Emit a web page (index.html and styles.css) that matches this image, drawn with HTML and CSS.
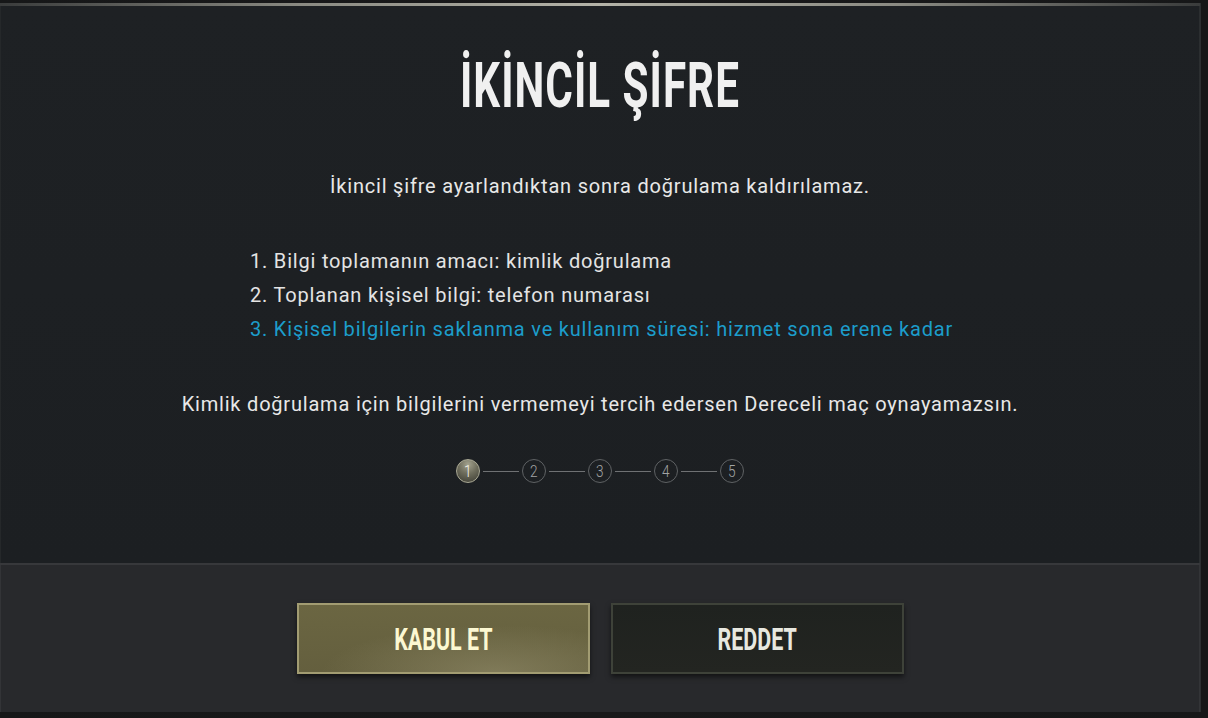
FILE: index.html
```html
<!DOCTYPE html>
<html lang="tr">
<head>
<meta charset="utf-8">
<title>İkincil Şifre</title>
<link rel="stylesheet" href="styles.css">
</head>
<body>
<div class="backdrop">
  <div class="dialog">
    <div class="topline"></div>
    <div class="content">
      <h1 class="title"><span class="squeeze">İKİNCİL ŞİFRE</span></h1>
      <p class="lead">İkincil şifre ayarlandıktan sonra doğrulama kaldırılamaz.</p>
      <ol class="info">
        <li>1. Bilgi toplamanın amacı: kimlik doğrulama</li>
        <li>2. Toplanan kişisel bilgi: telefon numarası</li>
        <li class="accent">3. Kişisel bilgilerin saklanma ve kullanım süresi: hizmet sona erene kadar</li>
      </ol>
      <p class="warn">Kimlik doğrulama için bilgilerini vermemeyi tercih edersen Dereceli maç oynayamazsın.</p>
      <div class="steps">
        <span class="step active"><span class="digit">1</span></span>
        <span class="link"></span>
        <span class="step"><span class="digit">2</span></span>
        <span class="link"></span>
        <span class="step"><span class="digit">3</span></span>
        <span class="link"></span>
        <span class="step"><span class="digit">4</span></span>
        <span class="link"></span>
        <span class="step"><span class="digit">5</span></span>
      </div>
    </div>
    <div class="footer">
      <button class="btn btn-accept"><span class="squeeze">KABUL ET</span></button>
      <button class="btn btn-reject"><span class="squeeze">REDDET</span></button>
    </div>
  </div>
</div>
</body>
</html>
```

FILE: styles.css
```css
html, body {
  margin: 0;
  padding: 0;
}

body {
  background: #121314;
  width: 1208px;
  height: 718px;
  overflow: hidden;
  font-family: Roboto, "Liberation Sans", sans-serif;
}

.backdrop {
  height: 718px;
  padding-top: 3px;
  box-sizing: border-box;
  background: linear-gradient(90deg, #161718 0%, #19191a 50%, #161718 100%);
}

.dialog {
  width: 1200px;
  height: 709px;
  display: flex;
  flex-direction: column;
  background: #1d2023;
  box-shadow: 1px 0 0 #2c2f31;
}

.topline {
  height: 3px;
  background: linear-gradient(90deg, #3a3c3c 0%, #8a8a82 25%, #b4b3a8 50%, #8a8a82 75%, #3a3c3c 100%);
}

.content {
  flex: 1;
  display: flex;
  flex-direction: column;
  align-items: center;
  padding-top: 50px;
  background: linear-gradient(180deg, #1e2124 0%, #1c1f22 100%);
  border-left: 1px solid #25282a;
  border-right: 1px solid #2b2e30;
}

.title {
  margin: 0;
  height: 60px;
  font-size: 63px;
  line-height: 60px;
  font-weight: 700;
  color: #f0f0f0;
  letter-spacing: 1.5px;
}

.squeeze {
  display: inline-block;
  transform: scaleX(0.67);
}

.lead,
.info,
.warn {
  font-size: 20px;
  letter-spacing: 0.8px;
}

.lead {
  margin: 56px 0 0;
  line-height: 28px;
  color: #e8e8e8;
}

.info {
  list-style: none;
  margin: 44px 0 0;
  padding: 0;
  align-self: flex-start;
  margin-left: 249px;
  line-height: 34px;
  color: #e4e4e4;
}

.info .accent {
  color: #1c9dcb;
}

.warn {
  margin: 44px 0 0;
  line-height: 28px;
  color: #e8e8e8;
}

.steps {
  margin-top: 41px;
  display: flex;
  align-items: center;
}

.step {
  width: 22px;
  height: 22px;
  border: 1px solid #5f6264;
  border-radius: 50%;
  display: flex;
  align-items: center;
  justify-content: center;
  font-size: 17px;
  line-height: 1;
  font-weight: 300;
  color: #a2a4a5;
}

.digit {
  display: inline-block;
  transform: scaleX(0.8);
}

.step.active {
  border-color: #a9a894;
  background: radial-gradient(circle at 50% 20%, #a3a28e 0%, #6e6d5c 45%, #3b3b32 100%);
  color: #f4f4ea;
}

.link {
  width: 36px;
  height: 1px;
  margin: 0 3px;
  background: #6f7173;
}

.footer {
  height: 147px;
  border-top: 2px solid #37383b;
  background: #28292c;
  display: flex;
  align-items: center;
  justify-content: center;
  gap: 21px;
  box-shadow: inset 1px 0 0 #333437, inset -1px 0 0 #333437;
}

.btn {
  width: 293px;
  height: 71px;
  padding: 0;
  font-family: Roboto, "Liberation Sans", sans-serif;
  font-size: 32px;
  font-weight: 700;
  cursor: pointer;
  box-shadow: 0 3px 5px rgba(0, 0, 0, 0.55);
}

.btn .squeeze {
  transform: scaleX(0.67);
}

.btn-accept {
  border: 2px solid #a29c72;
  background:
    radial-gradient(ellipse 60% 70% at 68% 100%, rgba(150, 144, 110, 0.55) 0%, rgba(150, 144, 110, 0) 100%),
    linear-gradient(180deg, #6b6642 0%, #645f3e 100%);
  color: #fcf8d2;
}

.btn-reject {
  border: 2px solid #3e4239;
  background: linear-gradient(180deg, #1f221f 0%, #232521 100%);
  color: #e8e8e0;
}
```
